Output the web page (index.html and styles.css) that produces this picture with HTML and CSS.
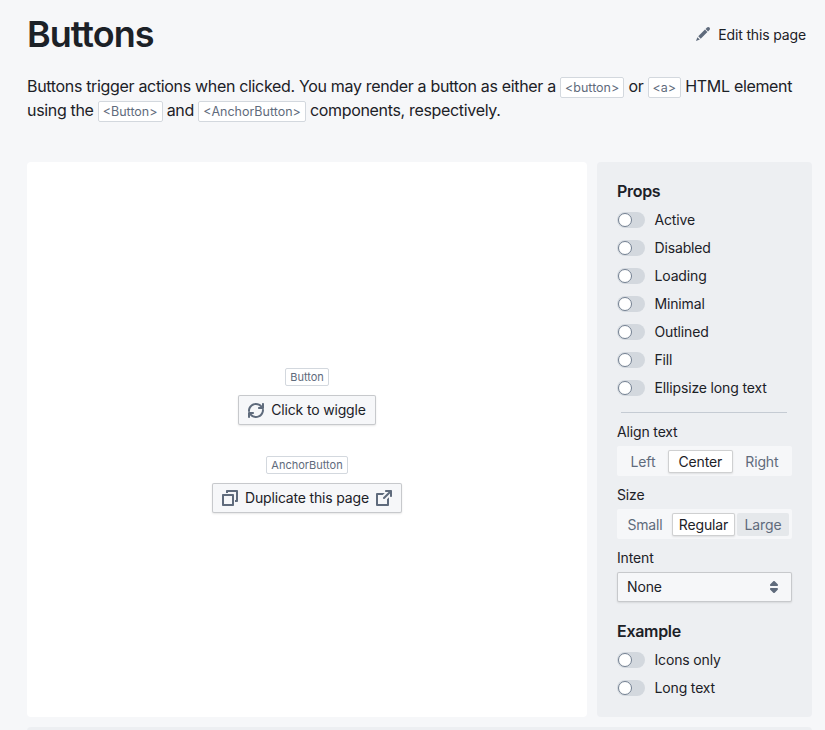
FILE: index.html
```html
<!DOCTYPE html>
<html lang="en">
<head>
    <meta charset="UTF-8">
    <title>Buttons</title>
    <link rel="stylesheet" href="styles.css">
</head>
<body>
    <header class="page-header">
        <h1>Buttons</h1>
        <a class="edit-link">
            <svg class="icon" viewBox="0 0 16 16" width="16" height="16"><path d="M3.25 10.26l2.47 2.47 6.69-6.69-2.46-2.48-6.7 6.7zM.99 14.99l3.86-1.39-2.46-2.44-1.4 3.83zm12.25-14c-.48 0-.92.2-1.24.51l-1.44 1.44 2.47 2.47 1.44-1.44c.32-.32.51-.75.51-1.24.01-.96-.77-1.74-1.74-1.74z"/></svg>
            Edit this page
        </a>
    </header>

    <p class="intro">Buttons trigger actions when clicked. You may render a button as either a <code>&lt;button&gt;</code> or <code>&lt;a&gt;</code> HTML element using the <code>&lt;Button&gt;</code> and <code>&lt;AnchorButton&gt;</code> components, respectively.</p>

    <div class="example">
        <div class="demo">
            <code class="demo-tag">Button</code>
            <button class="btn">
                <svg class="icon" viewBox="0 0 16 16" width="16" height="16"><path d="M14.99 6.99c-.55 0-1 .45-1 1 0 3.31-2.69 6-6 6-1.77 0-3.36-.78-4.46-2h1.46c.55 0 1-.45 1-1s-.45-1-1-1h-4c-.55 0-1 .45-1 1v4c0 .55.45 1 1 1s1-.45 1-1v-1.74c1.46 1.69 3.61 2.74 6 2.74 4.42 0 8-3.58 8-8 0-.55-.45-1-1-1zm0-6c-.55 0-1 .45-1 1v1.74c-1.46-1.69-3.61-2.74-6-2.74-4.42 0-8 3.58-8 8 0 .55.45 1 1 1s1-.45 1-1c0-3.31 2.69-6 6-6 1.77 0 3.36.78 4.46 2h-1.46c-.55 0-1 .45-1 1s.45 1 1 1h4c.55 0 1-.45 1-1v-4c0-.55-.45-1-1-1z"/></svg>
                <span class="label">Click to wiggle</span>
            </button>
            <code class="demo-tag tag-second">AnchorButton</code>
            <button class="btn">
                <svg class="icon" viewBox="0 0 16 16" width="16" height="16"><path d="M15 0H5c-.55 0-1 .45-1 1v2h2V2h8v8h-1v2h2c.55 0 1-.45 1-1V1c0-.55-.45-1-1-1zm-4 4H1c-.55 0-1 .45-1 1v10c0 .55.45 1 1 1h10c.55 0 1-.45 1-1V5c0-.55-.45-1-1-1zm-1 10H2V6h8v8z"/></svg>
                <span class="label">Duplicate this page</span>
                <svg class="icon" viewBox="0 0 16 16" width="16" height="16"><path d="M10.99 13.99h-9v-9h4.76l2-2H.99c-.55 0-1 .45-1 1v11c0 .55.45 1 1 1h11c.55 0 1-.45 1-1V7.24l-2 2v4.75zm4-14h-5c-.55 0-1 .45-1 1s.45 1 1 1h2.59L7.29 7.28a1.003 1.003 0 001.42 1.42l5.29-5.3V6c0 .55.45 1 1 1s1-.45 1-1V1c0-.55-.45-1-1-1z"/></svg>
            </button>
        </div>

        <aside class="options">
            <h4>Props</h4>
            <label class="switch"><span class="track"><span class="knob"></span></span>Active</label>
            <label class="switch"><span class="track"><span class="knob"></span></span>Disabled</label>
            <label class="switch"><span class="track"><span class="knob"></span></span>Loading</label>
            <label class="switch"><span class="track"><span class="knob"></span></span>Minimal</label>
            <label class="switch"><span class="track"><span class="knob"></span></span>Outlined</label>
            <label class="switch"><span class="track"><span class="knob"></span></span>Fill</label>
            <label class="switch"><span class="track"><span class="knob"></span></span>Ellipsize long text</label>

            <div class="divider"></div>

            <div class="field-label">Align text</div>
            <div class="segments">
                <span class="seg seg-grow">Left</span>
                <span class="seg seg-grow selected">Center</span>
                <span class="seg seg-grow">Right</span>
            </div>

            <div class="field-label">Size</div>
            <div class="segments">
                <span class="seg seg-small">Small</span>
                <span class="seg seg-regular selected">Regular</span>
                <span class="seg seg-large hovered">Large</span>
            </div>

            <div class="field-label">Intent</div>
            <div class="select">
                <span class="label">None</span>
                <svg class="icon" viewBox="0 0 16 16" width="16" height="16"><path d="M5 7h6c.55 0 1-.45 1-1 0-.28-.11-.53-.29-.71l-3-3C8.53 2.11 8.28 2 8 2s-.53.11-.71.29l-3 3A1.003 1.003 0 005 7zm6 2H5c-.55 0-1 .45-1 1 0 .28.11.53.29.71l3 3c.18.18.43.29.71.29s.53-.11.71-.29l3-3A1.003 1.003 0 0011 9z"/></svg>
            </div>

            <h4 class="second-heading">Example</h4>
            <label class="switch"><span class="track"><span class="knob"></span></span>Icons only</label>
            <label class="switch"><span class="track"><span class="knob"></span></span>Long text</label>
        </aside>
    </div>

    <div class="next-block"></div>
</body>
</html>
```

FILE: styles.css
```css
html, body {
    height: 730px;
    overflow: hidden;
}
body {
    margin: 0;
    padding: 0 13px 0 27px;
    background-color: #f6f7f9;
    color: #1c2127;
    font-family: Inter, "Liberation Sans", sans-serif;
    font-size: 14px;
    letter-spacing: -0.15px;
}
.page-header {
    display: flex;
    justify-content: space-between;
    align-items: center;
    height: 68px;
    padding-right: 6px;
}
h1 {
    margin: 0;
    font-size: 36px;
    font-weight: 600;
    line-height: 40px;
    letter-spacing: -1px;
}
.edit-link {
    display: flex;
    align-items: center;
    gap: 7px;
}
.intro {
    margin: 6px 0 0;
    font-size: 16px;
    line-height: 24px;
    letter-spacing: -0.33px;
    height: 88px;
}
code {
    font-family: Inter, "Liberation Sans", sans-serif;
    font-size: 12.5px;
    line-height: 15px;
    letter-spacing: 0;
    color: #5f6b7c;
    background-color: #fff;
    border: 1px solid #d3d8de;
    border-radius: 2px;
    padding: 2px 4px;
}
.example {
    display: flex;
    gap: 10px;
    height: 555px;
}
.demo {
    flex: 1;
    display: flex;
    flex-direction: column;
    align-items: center;
    justify-content: center;
    padding-top: 2px;
    background-color: #fff;
    border-radius: 4px;
}
.demo-tag {
    display: block;
    font-size: 11px;
    line-height: 16px;
    padding: 0 4px;
    margin-bottom: 9px;
}
.tag-second {
    margin-top: 31px;
}
.btn {
    display: flex;
    align-items: center;
    justify-content: center;
    gap: 7px;
    height: 30px;
    padding: 0 10px;
    background-color: #f6f7f9;
    border: 0;
    border-radius: 2px;
    box-shadow: inset 0 0 0 1px rgba(17, 20, 24, .2), 0 1px 2px rgba(17, 20, 24, .1);
    color: #1c2127;
    font-family: inherit;
    font-size: 14px;
    letter-spacing: -0.17px;
}
.label {
    margin-bottom: 2px;
}
.icon {
    fill: #5f6b7c;
}
.options {
    width: 215px;
    box-sizing: border-box;
    padding: 20px 20px 0;
    background-color: #edeff2;
    border-radius: 4px;
}
h4 {
    margin: 0 0 4px;
    font-size: 16px;
    font-weight: 600;
    line-height: 19px;
    letter-spacing: -0.3px;
}
.second-heading {
    margin-top: 20px;
}
.switch {
    display: flex;
    align-items: center;
    gap: 9.5px;
    height: 28px;
    color: #1c2127;
}
.track {
    display: block;
    width: 28px;
    height: 16px;
    margin-top: 2px;
    background-color: #d3d8de;
    border-radius: 8px;
}
.knob {
    display: block;
    box-sizing: border-box;
    width: 14px;
    height: 14px;
    margin: 1px;
    background-color: #fff;
    border: 1px solid #738091;
    border-radius: 50%;
}
.divider {
    margin: 11px 5px 10px 4px;
    border-top: 1px solid #c5cbd3;
}
.field-label {
    line-height: 18px;
    margin-bottom: 5px;
}
.segments {
    display: flex;
    gap: 2px;
    align-items: center;
    width: 175px;
    height: 30px;
    box-sizing: border-box;
    padding: 3px;
    margin-bottom: 10px;
    background-color: #f6f7f9;
    border-radius: 2px;
}
.seg {
    display: flex;
    align-items: center;
    justify-content: center;
    height: 23px;
    color: #5f6b7c;
    border-radius: 2px;
}
.seg-grow {
    flex: 1 1 auto;
    padding: 0 10px;
}
.seg-small {
    width: 50px;
}
.seg-regular {
    width: 63px;
}
.seg-large {
    width: 52px;
}
.selected {
    background-color: #fff;
    color: #1c2127;
    box-shadow: inset 0 0 0 1px rgba(17, 20, 24, .2), 0 1px 2px rgba(17, 20, 24, .1);
}
.hovered {
    background-color: #e5e8eb;
}
.select {
    display: flex;
    align-items: center;
    justify-content: space-between;
    box-sizing: border-box;
    width: 175px;
    height: 30px;
    padding: 0 10px;
    background-color: #f6f7f9;
    border-radius: 2px;
    box-shadow: inset 0 0 0 1px rgba(17, 20, 24, .2), 0 1px 2px rgba(17, 20, 24, .1);
}
.next-block {
    height: 20px;
    margin-top: 10px;
    background-color: #edeff2;
    border-radius: 4px;
}
```
